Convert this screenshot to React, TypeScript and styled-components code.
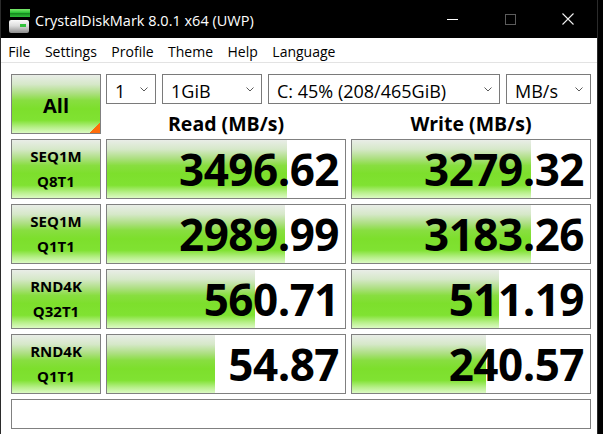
import React from "react";
import styled, { createGlobalStyle } from "styled-components";

const GREEN =
    "linear-gradient(to bottom, #e9ede7 0%, #d6e8c9 16%, #acdf80 32%, #88de40 44%, #7ddf2c 58%, #80e232 78%, #b6ef88 90%, #dcfac4 100%)";

const GlobalStyle = createGlobalStyle`
    html, body {
        margin: 0;
        padding: 0;
        background: #000;
    }
    body {
        font-family: "Open Sans", "Noto Sans", sans-serif;
        color: #000;
    }
    * {
        box-sizing: border-box;
    }
`;

const Window = styled.div`
    width: 598px;
    height: 434px;
    border-left: 1px solid #2b2b2b;
    border-right: 1px solid #2b2b2b;
    background: #fff;
    display: flex;
    flex-direction: column;
    overflow: hidden;
`;

const TitleBar = styled.div`
    height: 38px;
    flex-shrink: 0;
    background: #000;
    color: #fff;
    display: flex;
    align-items: center;
    padding-left: 8px;
`;

const AppIcon = styled.svg`
    margin-top: 4px;
    flex-shrink: 0;
`;

const Title = styled.span`
    margin-left: 4px;
    padding-top: 3px;
    font-size: 14.5px;
    white-space: nowrap;
`;

const Controls = styled.div`
    margin-left: auto;
    display: flex;
    height: 100%;
`;

const CtlButton = styled.div<{ $w: number }>`
    width: ${(p) => p.$w}px;
    height: 100%;
    display: flex;
    align-items: center;
    justify-content: center;
`;

const MenuBar = styled.div`
    height: 25px;
    flex-shrink: 0;
    border-bottom: 1px solid #e3e3e3;
    display: flex;
    font-size: 14px;
`;

const MenuItem = styled.span`
    padding: 3px 7.25px 0;
    line-height: 21px;
`;

const Main = styled.div`
    padding: 11px 0 0 10px;
    display: grid;
    grid-template-columns: 90px 240px 240px;
    grid-template-rows: repeat(5, 60px) 30px;
    gap: 5px;
`;

const AllButton = styled.div`
    border: 1px solid #808080;
    background:
        linear-gradient(to bottom right, transparent 50%, #ff6c0a 50%) right bottom / 10px 10px no-repeat,
        ${GREEN};
    display: flex;
    align-items: center;
    justify-content: center;
    padding-top: 3px;
    font-size: 20px;
    font-weight: 700;
`;

const TopRight = styled.div`
    grid-column: 2 / 4;
    display: flex;
    flex-direction: column;
`;

const ComboRow = styled.div`
    height: 30px;
    display: flex;
    gap: 6px;
`;

const Combo = styled.div<{ $w?: number }>`
    ${(p) => (p.$w ? `width: ${p.$w}px;` : "flex: 1;")}
    border: 1px solid #7a7a7a;
    background: #fff;
    display: flex;
    align-items: center;
    justify-content: space-between;
    padding: 4px 7px 0 8px;
    font-size: 18px;
    white-space: nowrap;
`;

const Chevron = styled.svg`
    margin-top: -4px;
    flex-shrink: 0;
`;

const HeaderRow = styled.div`
    flex: 1;
    display: grid;
    grid-template-columns: 240px 240px;
    column-gap: 5px;
    align-items: end;
`;

const Header = styled.div`
    text-align: center;
    font-size: 19.5px;
    font-weight: 700;
    line-height: 20px;
`;

const Label = styled.div`
    border: 1px solid #808080;
    background: ${GREEN};
    display: flex;
    flex-direction: column;
    align-items: center;
    justify-content: center;
    font-size: 15px;
    font-weight: 700;
    line-height: 25px;
`;

const ValueBox = styled.div<{ $fill: number }>`
    border: 1px solid #808080;
    background-color: #fff;
    background-image: ${GREEN};
    background-repeat: no-repeat;
    background-size: ${(p) => p.$fill}px 100%;
    text-align: right;
    padding-right: 6px;
    font-size: 44px;
    font-weight: 700;
    line-height: 58px;
    letter-spacing: -0.5px;
`;

const Status = styled.div`
    grid-column: 1 / -1;
    border: 1px solid #808080;
    background: #fff;
`;

const rows = [
    { l1: "SEQ1M", l2: "Q8T1", read: "3496.62", readFill: 180, write: "3279.32", writeFill: 179 },
    { l1: "SEQ1M", l2: "Q1T1", read: "2989.99", readFill: 178, write: "3183.26", writeFill: 179 },
    { l1: "RND4K", l2: "Q32T1", read: "560.71", readFill: 148, write: "511.19", writeFill: 147 },
    { l1: "RND4K", l2: "Q1T1", read: "54.87", readFill: 108, write: "240.57", writeFill: 134 },
];

const menus = ["File", "Settings", "Profile", "Theme", "Help", "Language"];

const Arrow = () => (
    <Chevron width="8" height="5" viewBox="0 0 8 5">
        <polyline points="0.5,0.5 4,4 7.5,0.5" fill="none" stroke="#5a5a5a" strokeWidth="1" />
    </Chevron>
);

export default function App() {
    return (
        <>
            <GlobalStyle />
            <Window>
                <TitleBar>
                    <AppIcon width="22" height="25" viewBox="0 0 22 25">
                        <defs>
                            <linearGradient id="topG" x1="0" y1="0" x2="0" y2="1">
                                <stop offset="0" stopColor="#7dea6e" />
                                <stop offset="0.45" stopColor="#2cc537" />
                                <stop offset="0.55" stopColor="#168a1f" />
                                <stop offset="1" stopColor="#2fbf39" />
                            </linearGradient>
                            <linearGradient id="boxG" x1="0" y1="0" x2="0" y2="1">
                                <stop offset="0" stopColor="#fbfbfb" />
                                <stop offset="0.45" stopColor="#dcdcdc" />
                                <stop offset="1" stopColor="#8c8c8c" />
                            </linearGradient>
                        </defs>
                        <rect x="1" y="0" width="20" height="8" fill="url(#topG)" />
                        <rect x="0" y="11" width="20" height="13" rx="2" fill="url(#boxG)" />
                        <rect x="11" y="15" width="6" height="3" fill="#33c23d" />
                    </AppIcon>
                    <Title>CrystalDiskMark 8.0.1 x64 (UWP)</Title>
                    <Controls>
                        <CtlButton $w={58}>
                            <svg width="11" height="11" viewBox="0 0 11 11">
                                <line x1="0" y1="5.5" x2="11" y2="5.5" stroke="#fff" strokeWidth="1" />
                            </svg>
                        </CtlButton>
                        <CtlButton $w={58}>
                            <svg width="11" height="11" viewBox="0 0 11 11">
                                <rect x="0.5" y="0.5" width="10" height="10" fill="none" stroke="#5c5c5c" strokeWidth="1" />
                            </svg>
                        </CtlButton>
                        <CtlButton $w={58}>
                            <svg width="12" height="12" viewBox="0 0 12 12">
                                <path d="M0.5 0.5 L11.5 11.5 M11.5 0.5 L0.5 11.5" stroke="#f0f0f0" strokeWidth="1.1" />
                            </svg>
                        </CtlButton>
                    </Controls>
                </TitleBar>
                <MenuBar>
                    {menus.map((m) => (
                        <MenuItem key={m}>{m}</MenuItem>
                    ))}
                </MenuBar>
                <Main>
                    <AllButton>All</AllButton>
                    <TopRight>
                        <ComboRow>
                            <Combo $w={50}>
                                1<Arrow />
                            </Combo>
                            <Combo $w={100}>
                                1GiB<Arrow />
                            </Combo>
                            <Combo>
                                C: 45% (208/465GiB)<Arrow />
                            </Combo>
                            <Combo $w={85}>
                                MB/s<Arrow />
                            </Combo>
                        </ComboRow>
                        <HeaderRow>
                            <Header>Read (MB/s)</Header>
                            <Header>Write (MB/s)</Header>
                        </HeaderRow>
                    </TopRight>
                    {rows.map((r, i) => (
                        <React.Fragment key={i}>
                            <Label>
                                <span>{r.l1}</span>
                                <span>{r.l2}</span>
                            </Label>
                            <ValueBox $fill={r.readFill}>{r.read}</ValueBox>
                            <ValueBox $fill={r.writeFill}>{r.write}</ValueBox>
                        </React.Fragment>
                    ))}
                    <Status />
                </Main>
            </Window>
        </>
    );
}
